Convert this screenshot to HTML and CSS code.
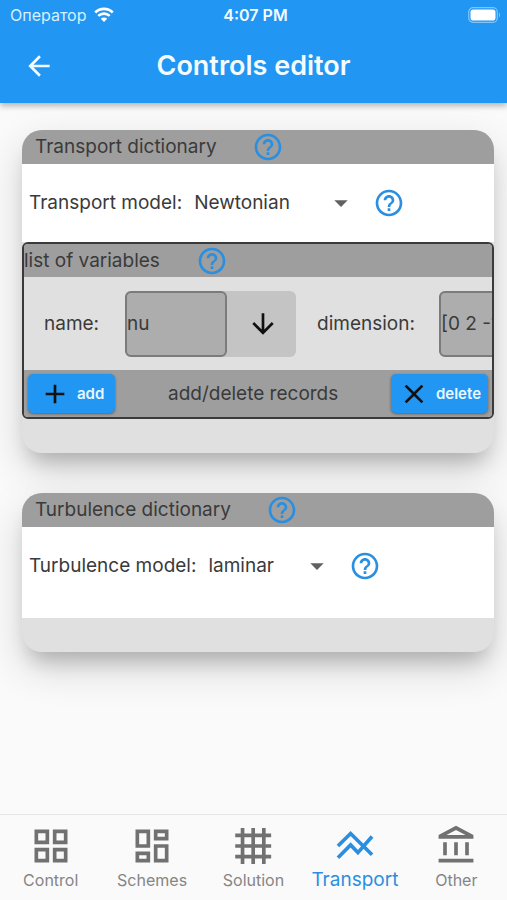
FILE: index.html
```html
<!DOCTYPE html>
<html lang="en">
<head>
<meta charset="utf-8">
<meta name="viewport" content="width=device-width, initial-scale=1">
<title>Controls editor</title>
<link rel="stylesheet" href="styles.css">
</head>
<body>
<svg class="sprite" aria-hidden="true">
  <symbol id="help" viewBox="0 0 24 24"><path d="M11 18h2v-2h-2v2zm1-16C6.480 2 2 6.480 2 12s4.480 10 10 10 10-4.480 10-10S17.520 2 12 2zm0 18c-4.410 0-8-3.590-8-8s3.590-8 8-8 8 3.590 8 8-3.590 8-8 8zm0-14c-2.210 0-4 1.790-4 4h2c0-1.100.9-2 2-2s2 .9 2 2c0 2-3 1.750-3 5h2c0-2.250 3-2.500 3-5 0-2.210-1.790-4-4-4z"/></symbol>
  <symbol id="caret" viewBox="0 0 24 24"><path d="M7 10l5 5 5-5z"/></symbol>
</svg>
<header class="top">
  <div class="status">
    <span class="carrier">Оператор
      <svg class="wifi" viewBox="0 0 20 15"><path d="M10 15L6.800 11.700a4.600 4.600 0 0 1 6.400 0z"/><path class="arc" d="M4.300 8.900a8.200 8.200 0 0 1 11.400 0M1.200 5.500a12.600 12.600 0 0 1 17.600 0"/></svg>
    </span>
    <span class="time">4:07 PM</span>
    <svg class="battery" viewBox="0 0 33 16"><rect class="case" x=".7" y=".7" width="28.600" height="14.600" rx="4.500"/><rect x="2.500" y="2.500" width="25" height="11" rx="2.800"/><path class="tip" d="M31 5.500q2 2.500 0 5z"/></svg>
  </div>
  <div class="bar">
    <button class="back" aria-label="Back"><svg class="icon" viewBox="0 0 24 24"><path d="M20 11H7.830l5.590-5.590L12 4l-8 8 8 8 1.410-1.410L7.830 13H20v-2z"/></svg></button>
    <h1>Controls editor</h1>
  </div>
</header>

<main>
  <section class="card">
    <div class="card-head">
      <h2>Transport dictionary</h2>
      <button class="help" aria-label="Help: Transport dictionary"><svg class="icon"><use href="#help"/></svg></button>
    </div>
    <div class="model">
      <label for="transport">Transport model:</label>
      <span class="picker picker-wide"><select id="transport"><option>Newtonian</option></select><svg class="icon caret"><use href="#caret"/></svg></span>
      <button class="help" aria-label="Help: Transport model"><svg class="icon"><use href="#help"/></svg></button>
    </div>
    <div class="variables">
      <div class="list-head">
        <h3>list of variables</h3>
        <button class="help" aria-label="Help: list of variables"><svg class="icon"><use href="#help"/></svg></button>
      </div>
      <div class="record">
        <label class="name-label" for="name">name:</label>
        <div class="field">
          <input id="name" value="nu">
          <button class="pick" aria-label="Choose name"><svg class="icon" viewBox="0 0 24 24"><path d="M20 12l-1.410-1.410L13 16.170V4h-2v12.170l-5.580-5.590L4 12l8 8 8-8z"/></svg></button>
        </div>
        <label class="dimension-label" for="dimension">dimension:</label>
        <div class="field">
          <input id="dimension" value="[0 2 -1 0 0 0 0]">
        </div>
      </div>
      <div class="actions">
        <button class="action action-add"><svg class="icon" viewBox="0 0 24 24"><path d="M19 13h-6v6h-2v-6H5v-2h6V5h2v6h6v2z"/></svg>add</button>
        <span>add/delete records</span>
        <button class="action"><svg class="icon" viewBox="0 0 24 24"><path d="M19 6.410L17.590 5 12 10.590 6.410 5 5 6.410 10.590 12 5 17.590 6.410 19 12 13.410 17.590 19 19 17.590 13.410 12z"/></svg>delete</button>
      </div>
    </div>
  </section>

  <section class="card">
    <div class="card-head">
      <h2>Turbulence dictionary</h2>
      <button class="help" aria-label="Help: Turbulence dictionary"><svg class="icon"><use href="#help"/></svg></button>
    </div>
    <div class="model model-tall">
      <label for="turbulence">Turbulence model:</label>
      <span class="picker"><select id="turbulence"><option>laminar</option></select><svg class="icon caret"><use href="#caret"/></svg></span>
      <button class="help" aria-label="Help: Turbulence model"><svg class="icon"><use href="#help"/></svg></button>
    </div>
  </section>
</main>

<nav>
  <a href="#control"><svg class="nav-icon" viewBox="0 0 24 24"><path fill-rule="evenodd" d="M3 3v8h8V3H3zm6 6H5V5h4v4zm-6 4v8h8v-8H3zm6 6H5v-4h4v4zm4-16v8h8V3h-8zm6 6h-4V5h4v4zm-6 4v8h8v-8h-8zm6 6h-4v-4h4v4z"/></svg>Control</a>
  <a href="#schemes"><svg class="nav-icon" viewBox="0 0 24 24"><path d="M19 5v2h-4V5h4M9 5v6H5V5h4m10 8v6h-4v-6h4M9 17v2H5v-2h4M21 3h-8v6h8V3zM11 3H3v10h8V3zm10 8h-8v10h8V11zm-10 4H3v6h8v-6z"/></svg>Schemes</a>
  <a href="#solution"><svg class="nav-icon" viewBox="0 0 24 24"><path class="line" d="M6.300 2.200v19.600M12.100 2.200v19.600M17.900 2.200v19.600M2.300 6.200h19.600M2.300 12h19.600M2.300 17.800h19.600"/></svg>Solution</a>
  <a href="#transport" class="active" aria-current="page"><svg class="nav-icon" viewBox="0 0 24 24"><path class="line" d="M2.700 12L9.600 5.200l11.700 11.600M2.700 18.400l6.900-7 4 4.200 7.700-8.800"/></svg>Transport</a>
  <a href="#other"><svg class="nav-icon" viewBox="0 0 24 24"><path d="M7 10H5v7h2v-7zm6 0h-2v7h2v-7zm8.500 9h-19v2h19v-2zM19 10h-2v7h2v-7zm-7-6.740L17.210 6H6.790L12 3.260m0-2.260L2.500 6v2h19V6L12 1z"/></svg>Other</a>
</nav>
</body>
</html>
```
FILE: styles.css
```css
* { box-sizing: border-box; }

body {
  margin: 0;
  min-height: 100vh;
  display: flex;
  flex-direction: column;
  background: #fafafa;
  color: #3a3a3a;
  font: 19px/24px Inter, "Liberation Sans", sans-serif;
}

h1, h2, h3 { margin: 0; font: inherit; }

button, input, select {
  margin: 0;
  padding: 0;
  border: 0;
  background: none;
  color: inherit;
  font: inherit;
}

button { display: flex; align-items: center; }

.sprite { position: absolute; width: 0; height: 0; }

.icon { display: block; width: 32px; height: 32px; fill: currentColor; flex: none; }

.top {
  background: #2196f3;
  color: #f4fcff;
  box-shadow: 0 3px 6px rgba(0, 0, 0, .28);
  z-index: 1;
}

.status {
  display: grid;
  grid-template-columns: 1fr auto 1fr;
  align-items: center;
  height: 29px;
  padding: 0 6px 0 10px;
  font-size: 16px;
}

.carrier { display: flex; align-items: center; gap: 8px; color: #d5f0ff; }
.wifi { width: 20px; height: 15px; fill: #fff; }
.wifi .arc { fill: none; stroke: #fff; stroke-width: 2.6; }
.time { font-weight: 600; }
.battery { justify-self: end; width: 33px; height: 16px; fill: #fff; }
.battery .case { fill: none; stroke: #83c5f9; stroke-width: 1.2; }
.battery .tip { fill: #83c5f9; }

.bar {
  display: grid;
  grid-template-columns: 1fr auto 1fr;
  align-items: center;
  height: 74px;
  padding: 0 23px;
}

.bar h1 { font-size: 27px; line-height: 32px; font-weight: 600; }

main {
  flex: 1;
  display: flex;
  flex-direction: column;
  gap: 40px;
  padding: 27px 13px 40px 22px;
}

.card {
  padding-bottom: 34px;
  border-radius: 20px;
  background: #e0e0e0;
  box-shadow: 0 16px 20px -8px rgba(0, 0, 0, .2), 0 16px 40px rgba(0, 0, 0, .16);
}

.card-head {
  display: flex;
  align-items: center;
  gap: 35px;
  height: 34px;
  padding-left: 13px;
  border-radius: 20px 20px 0 0;
  background: #9e9e9e;
}

.help { color: #2a8fe0; }

.model {
  display: flex;
  align-items: center;
  height: 78px;
  padding-left: 7px;
  background: #fff;
}

.model-tall { height: 91px; padding-bottom: 13px; }

.picker { position: relative; width: 125px; margin: 0 16px 0 12px; }
.picker-wide { width: 163px; }
.picker select { width: 100%; height: 32px; appearance: none; outline: 0; }
.caret { position: absolute; right: 0; top: 0; color: #616161; pointer-events: none; }

.variables {
  overflow: hidden;
  border: 2px solid #3a3a3a;
  border-radius: 6px;
  background: #e0e0e0;
}

.list-head {
  display: flex;
  align-items: center;
  gap: 36px;
  height: 33px;
  background: #9e9e9e;
}

.record { display: flex; align-items: center; height: 93px; padding-left: 20px; }
.name-label { width: 81px; flex: none; }
.dimension-label { width: 122px; flex: none; }

.field {
  display: flex;
  flex: none;
  height: 66px;
  margin-right: 21px;
  border-radius: 6px;
  background: #c4c4c4;
}

.field input {
  width: 102px;
  border: 2px solid #7b7b7b;
  border-radius: 6px;
  background: #adadad;
}

.pick { width: 69px; padding-left: 20px; color: #111; }

.actions {
  display: flex;
  align-items: center;
  justify-content: space-between;
  height: 47px;
  padding: 0 4px;
  background: #9e9e9e;
}

.action {
  gap: 6px;
  height: 39px;
  padding: 0 7px;
  border-radius: 5px;
  background: #2196f3;
  box-shadow: 0 1px 3px rgba(0, 0, 0, .4);
  color: #e9f9ff;
  font-size: 15px;
  font-weight: 600;
}

.action-add { padding: 0 11px; }
.action .icon { color: #111; }

nav {
  display: grid;
  grid-template-columns: repeat(5, 1fr);
  height: 86px;
  border-top: 1px solid #e6e6e6;
  background: #fafafa;
}

nav a {
  display: flex;
  flex-direction: column;
  align-items: center;
  padding-top: 9px;
  color: #858585;
  font-size: 16px;
  line-height: 24px;
  text-decoration: none;
}

.nav-icon { width: 44px; height: 44px; fill: #717171; }
.nav-icon .line { fill: none; stroke: #717171; stroke-width: 2; }
nav .active { color: #2a8fe0; font-size: 19px; }
nav .active .line { stroke: #2a8fe0; }
```
